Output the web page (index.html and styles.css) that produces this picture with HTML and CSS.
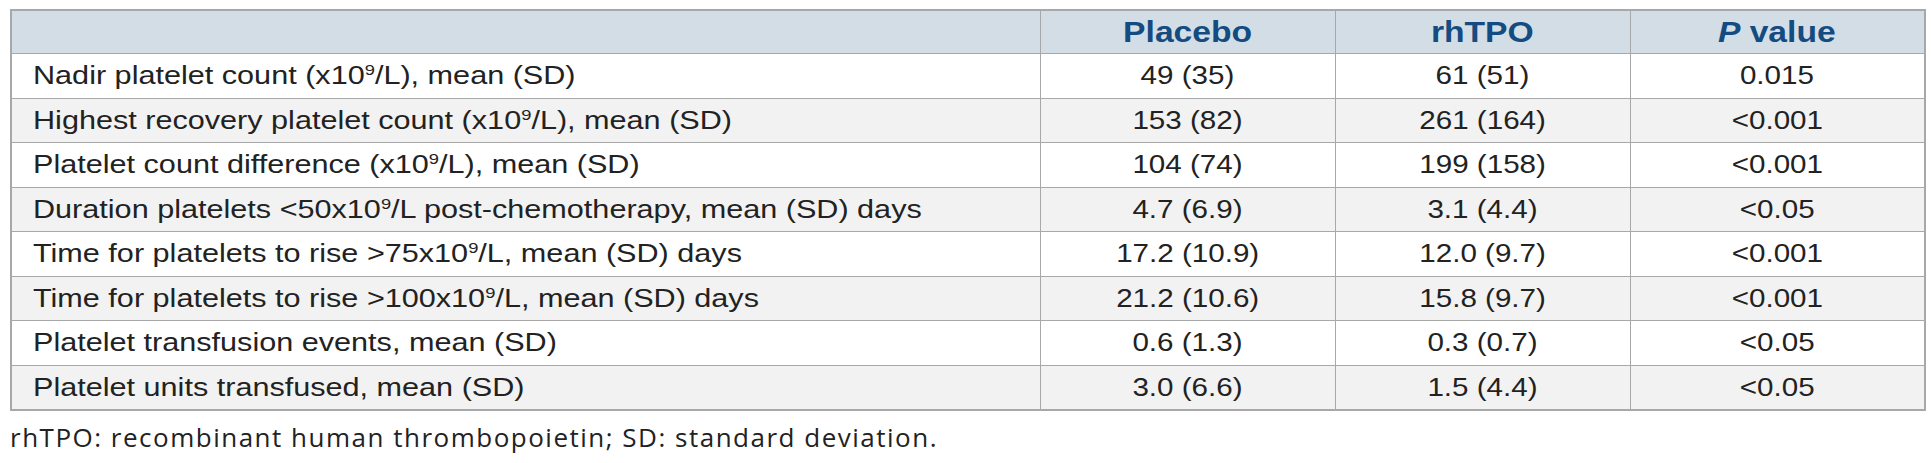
FILE: index.html
```html
<!DOCTYPE html>
<html>
<head>
<meta charset="utf-8">
<link rel="stylesheet" href="styles.css">
</head>
<body>
<div class="page">
  <table class="data">
    <colgroup>
      <col class="c-label">
      <col class="c-val">
      <col class="c-val">
      <col class="c-val">
    </colgroup>
    <thead>
      <tr>
        <th></th>
        <th><span class="t">Placebo</span></th>
        <th><span class="t">rhTPO</span></th>
        <th><span class="t"><i>P</i> value</span></th>
      </tr>
    </thead>
    <tbody>
      <tr><td><span class="t">Nadir platelet count (x10<sup>9</sup>/L), mean (SD)</span></td><td><span class="t">49 (35)</span></td><td><span class="t">61 (51)</span></td><td><span class="t">0.015</span></td></tr>
      <tr><td><span class="t">Highest recovery platelet count (x10<sup>9</sup>/L), mean (SD)</span></td><td><span class="t">153 (82)</span></td><td><span class="t">261 (164)</span></td><td><span class="t">&lt;0.001</span></td></tr>
      <tr><td><span class="t">Platelet count difference (x10<sup>9</sup>/L), mean (SD)</span></td><td><span class="t">104 (74)</span></td><td><span class="t">199 (158)</span></td><td><span class="t">&lt;0.001</span></td></tr>
      <tr><td><span class="t">Duration platelets &lt;50x10<sup>9</sup>/L post-chemotherapy, mean (SD) days</span></td><td><span class="t">4.7 (6.9)</span></td><td><span class="t">3.1 (4.4)</span></td><td><span class="t">&lt;0.05</span></td></tr>
      <tr><td><span class="t">Time for platelets to rise &gt;75x10<sup>9</sup>/L, mean (SD) days</span></td><td><span class="t">17.2 (10.9)</span></td><td><span class="t">12.0 (9.7)</span></td><td><span class="t">&lt;0.001</span></td></tr>
      <tr><td><span class="t">Time for platelets to rise &gt;100x10<sup>9</sup>/L, mean (SD) days</span></td><td><span class="t">21.2 (10.6)</span></td><td><span class="t">15.8 (9.7)</span></td><td><span class="t">&lt;0.001</span></td></tr>
      <tr><td><span class="t">Platelet transfusion events, mean (SD)</span></td><td><span class="t">0.6 (1.3)</span></td><td><span class="t">0.3 (0.7)</span></td><td><span class="t">&lt;0.05</span></td></tr>
      <tr><td><span class="t">Platelet units transfused, mean (SD)</span></td><td><span class="t">3.0 (6.6)</span></td><td><span class="t">1.5 (4.4)</span></td><td><span class="t">&lt;0.05</span></td></tr>
    </tbody>
  </table>
  <p class="note">rhTPO: recombinant human thrombopoietin; SD: standard deviation.</p>
</div>
</body>
</html>
```

FILE: styles.css
```css
html, body {
  margin: 0;
  padding: 0;
  background: #ffffff;
}

.page {
  padding: 9px 7px 0 10px;
}

.data {
  width: 1914px;
  border-collapse: collapse;
  table-layout: fixed;
  border: 2px solid #a8a8a8;
  font-family: "Liberation Sans", Arial, sans-serif;
  font-size: 25.5px;
  color: #222222;
}

.c-label { width: 1029px; }
.c-val { width: 295px; }

.t {
  display: inline-block;
  transform: scaleX(1.16);
  transform-origin: center center;
  white-space: nowrap;
}

.data th {
  height: 42px;
  padding: 0;
  background: #d3dde6;
  color: #144b80;
  font-weight: bold;
  font-size: 29px;
  text-align: center;
  border: 1px solid #a8a8a8;
  line-height: 1;
}

.data td {
  height: 43.5px;
  padding: 0;
  border: 1px solid #a8a8a8;
  text-align: center;
  line-height: 1;
  white-space: nowrap;
}

.data td:first-child {
  text-align: left;
  padding-left: 21px;
}

.data td:first-child .t {
  transform: scaleX(1.2);
  transform-origin: left center;
}

.data tbody tr:nth-child(even) td {
  background: #f2f2f2;
}

.data sup {
  font-size: 0.6em;
  line-height: 0;
  vertical-align: 0.6em;
}

.note {
  margin: 8px 0 0 0;
  font-family: "Open Sans", sans-serif;
  font-size: 26px;
  letter-spacing: 1.5px;
  color: #222222;
}
```
